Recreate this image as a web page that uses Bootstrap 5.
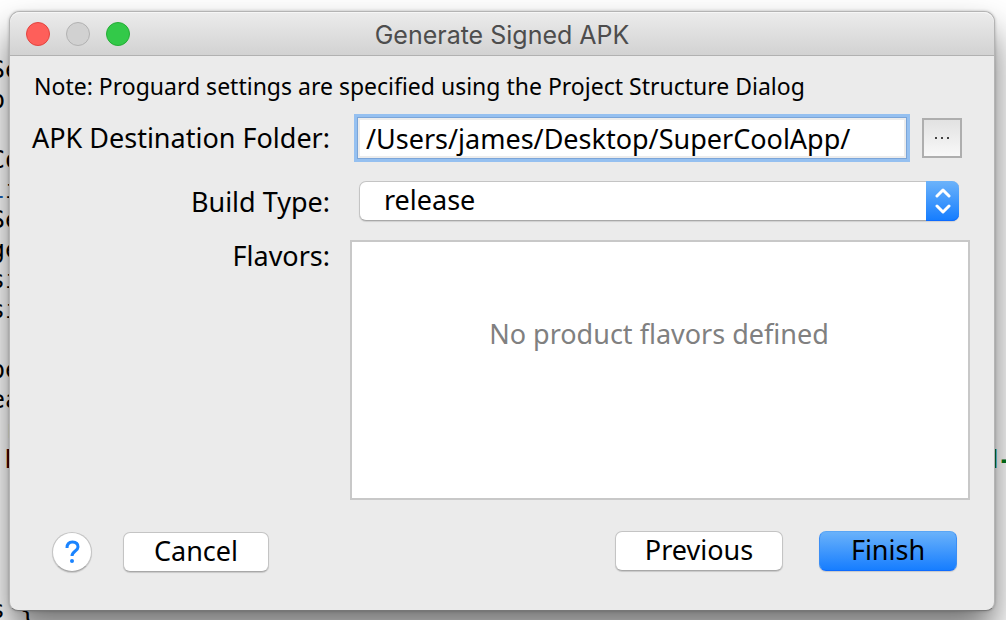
<!DOCTYPE html>
<html lang="en">
<head>
<meta charset="utf-8">
<meta name="viewport" content="width=device-width, initial-scale=1">
<title>Generate Signed APK</title>
<link href="https://cdn.jsdelivr.net/npm/bootstrap@5.3.0/dist/css/bootstrap.min.css" rel="stylesheet">
<style>
  body { font-family: "Noto Sans", "Open Sans", sans-serif; font-size: 27px; line-height: 36px; color: #000; background: #fff; }
  .desktop { display: grid; grid-template: 1fr / minmax(0, 1fr); height: 100vh; min-height: 620px; overflow: hidden; }
  .desktop > * { grid-area: 1 / 1; }

  /* editor behind the dialog */
  .editor { margin: 55px -7px 0 -10px; font: 25px/30px "DejaVu Sans Mono", monospace; overflow: visible; }
  .editor div { height: 30px; white-space: pre; }
  .tok-num { color: #1a5fb4; }
  .tok-key { color: #400000; font-weight: bold; }
  .tok-str { color: #007a1f; font-weight: bold; }

  .dialog-window { position: relative; align-self: start; margin: 11px 11px 0 9px; background: #ebebeb; border: 1px solid #b4b4b4; border-bottom-color: #777; border-radius: 11px 11px 9px 9px;
    box-shadow: 0 0 3px rgba(0,0,0,.25), 0 22px 36px rgba(0,0,0,.55); }
  .titlebar { display: grid; grid-template-columns: 1fr auto 1fr; align-items: center; height: 44px; padding: 0 16px; border-radius: 10px 10px 0 0;
    background: linear-gradient(#ececec, #d2d2d2); border-bottom: 1px solid #b1b1b1; box-shadow: inset 0 1px #f6f6f6; }
  .titlebar h1 { font: 25px/36px Inter, Roboto, sans-serif; color: #4d4d4d; margin: 0; padding-top: 2px; }
  .light { width: 24px; height: 24px; border-radius: 50%; border: 1px solid; padding: 0; }
  .light-close { background: #fe5f5a; border-color: #e2443f; }
  .light-min { background: #d1d1d1; border-color: #b2b2b2; }
  .light-zoom { background: #33c949; border-color: #25ad36; }

  .note { font-size: 23px; line-height: 32px; margin: 14px 0 11px 24px; }
  .form-grid { display: grid; grid-template-columns: 320px minmax(0, 1fr); padding-right: 24px; }
  .form-grid label, .form-grid .lbl { text-align: right; padding: 0; }
  .form-grid .lbl { line-height: 32px; }

  .path-row { padding: 4px 8px 4px 27px; gap: 15px; }
  .path-field { height: 42px; min-width: 0; flex: 1; border: 1px solid #7ba5d8; outline: 3px solid #95c0f0; background: #fff; box-shadow: inset 0 0 0 2px #ececec; padding: 0 8px; font: inherit; color: #000; }
  .browse-btn { width: 40px; height: 40px; border: 2px solid #aeaeae; background: linear-gradient(#e2e2e2, #f8f8f8); padding: 0; }

  .mac-select { position: relative; margin: 18px 11px 19px 29px; }
  .mac-select select { appearance: none; display: block; width: 100%; height: 40px; border: 1px solid #c4c4c4; border-bottom-color: #a8a8a8; border-radius: 7px; background: #fff; padding: 0 44px 2px 24px; font: inherit; color: #000; box-shadow: 0 1px 1px rgba(0,0,0,.12); }
  .stepper { position: absolute; inset: 0 0 0 auto; width: 33px; border-radius: 0 7px 7px 0; background: linear-gradient(#6cb3fa, #147cff); pointer-events: none; box-shadow: inset 0 -1px #0d6bff; }
  .flavor-list { margin-left: 20px; height: 260px; border: 2px solid #c8c8c8; background: #fff; color: #808080; text-align: center; padding: 74px 2px 0 0; }

  .footer-bar { padding: 31px 37px 37px 42px; }
  .help-btn { width: 40px; height: 40px; border-radius: 50%; border: 1px solid #c4c4c4; border-bottom-color: #a8a8a8; background: #fff; padding: 0; box-shadow: 0 1px 1px rgba(0,0,0,.15); }
  .mac-btn { height: 40px; border: 1px solid #c4c4c4; border-bottom-color: #a8a8a8; border-radius: 7px; background: #fff; padding: 0 0 2px; font-size: 27px; line-height: 36px; color: #000; box-shadow: 0 1px 1px rgba(0,0,0,.15); }
  .cancel-btn { width: 146px; margin-left: 31px; }
  .actions { gap: 36px; padding-bottom: 2px; }
  .prev-btn { width: 168px; }
  .finish-btn { width: 138px; border-color: #5aa6f5 #3b8ef5 #0d6bff; background: linear-gradient(#6cb3fa, #147cff) border-box; }
</style>
</head>
<body>
<div class="desktop">
  <div class="editor" aria-hidden="true">
    <div>Se</div><div>p'</div><div></div><div>Co</div><div><span class="tok-num">l</span>i</div><div>Se</div><div>ge</div><div>si</div><div>si</div><div></div><div>pe</div><div>ea</div><div> r</div>
    <div class="d-flex justify-content-between"><span class="tok-key"> b</span><span class="tok-str">d-</span></div>
    <div></div><div></div><div></div><div></div><div>s {</div>
  </div>

  <main class="dialog-window">
    <header class="titlebar">
      <div class="d-flex gap-3">
        <button class="light light-close" aria-label="Close"></button>
        <button class="light light-min" aria-label="Minimize"></button>
        <button class="light light-zoom" aria-label="Zoom"></button>
      </div>
      <h1>Generate Signed APK</h1>
    </header>

    <form onsubmit="return false">
      <p class="note">Note: Proguard settings are specified using the Project Structure Dialog</p>
      <div class="form-grid">
        <label for="dest" class="align-self-center">APK Destination Folder:</label>
        <div class="path-row d-flex align-items-center">
          <input id="dest" class="path-field" type="text" value="/Users/james/Desktop/SuperCoolApp/">
          <button type="button" class="browse-btn d-flex align-items-center justify-content-center" aria-label="Browse">
            <svg width="16" height="2" fill="#444"><path d="M1 0h2v2H1zM7 0h2v2H7zM13 0h2v2h-2z"/></svg>
          </button>
        </div>
        <label for="build" class="align-self-center">Build Type:</label>
        <div class="mac-select">
          <select id="build"><option>release</option></select>
          <span class="stepper d-flex align-items-center justify-content-center">
            <svg width="18" height="26" fill="none" stroke="#fff" stroke-width="3" stroke-linecap="round" stroke-linejoin="round"><path d="M3 8l6-6 6 6M3 18l6 6 6-6"/></svg>
          </span>
        </div>
        <div class="lbl" id="flavors">Flavors:</div>
        <div class="flavor-list" role="group" aria-labelledby="flavors">No product flavors defined</div>
      </div>
      <div class="footer-bar d-flex align-items-center">
        <button type="button" class="help-btn d-flex align-items-center justify-content-center" aria-label="Help">
          <svg width="16" height="24" fill="none" stroke="#1a84ff" stroke-width="3"><path d="M3 8C3 4 5 2 8.500 2S14 4 14 7c0 4-6 4-6 9"/><circle cx="8" cy="21" r="2" fill="#1a84ff" stroke="none"/></svg>
        </button>
        <button type="button" class="btn mac-btn cancel-btn">Cancel</button>
        <div class="ms-auto d-flex actions">
          <button type="button" class="btn mac-btn prev-btn">Previous</button>
          <button type="submit" class="btn mac-btn finish-btn">Finish</button>
        </div>
      </div>
    </form>
  </main>
</div>
<script src="https://cdn.jsdelivr.net/npm/bootstrap@5.3.0/dist/js/bootstrap.bundle.min.js"></script>
</body>
</html>
